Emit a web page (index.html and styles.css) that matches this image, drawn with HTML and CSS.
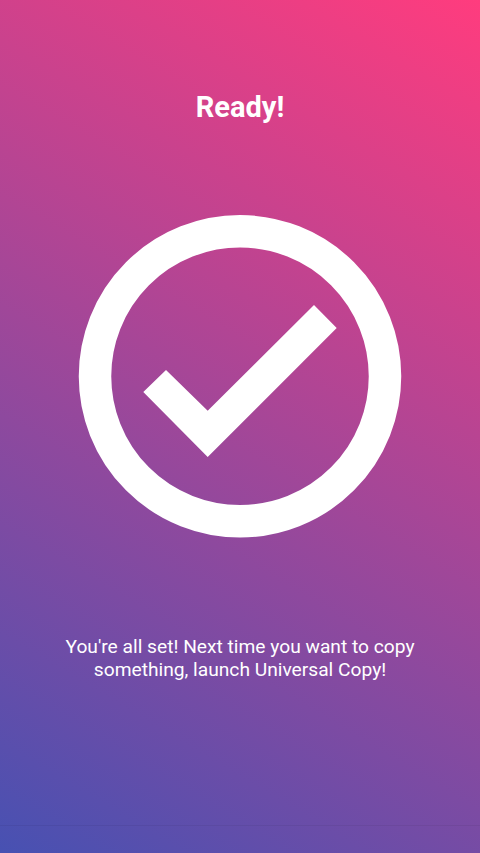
FILE: index.html
```html
<!DOCTYPE html>
<html lang="en">

<head>
    <meta charset="UTF-8">
    <title>Ready!</title>
    <link rel="stylesheet" href="styles.css">
</head>

<body>
    <div class="screen">
        <h1 class="title">Ready!</h1>
        <svg class="check" viewBox="0 0 324 324" aria-hidden="true">
            <circle cx="162" cy="162.300" r="145" fill="none" stroke="#fff" stroke-width="32.500" />
            <path fill="#fff" d="M236 91 L258.700 114 L129.700 243 L65.300 178 L88 156 L129.700 196.700 Z" />
        </svg>
        <p class="message">You're all set! Next time you want to copy something, launch Universal Copy!</p>
    </div>
    <div class="navBar"></div>
</body>

</html>
```

FILE: styles.css
```css
* {
    margin: 0px;
    padding: 0px;
}

html,
body {
    width: 100%;
    height: 100%;
}

body {
    display: flex;
    flex-direction: column;
    background: linear-gradient(31deg, #4751b2 0%, #ff3c7e 100%);
    color: #fff;
    font-family: Roboto, "Noto Sans", sans-serif;
    overflow: hidden;
}

.screen {
    flex: 1;
    display: flex;
    flex-direction: column;
    align-items: center;
    padding-top: 90px;
}

.title {
    font-size: 29px;
    line-height: 34px;
    font-weight: 700;
}

.check {
    width: 324px;
    height: 324px;
    margin-top: 90px;
}

.message {
    width: 372px;
    margin-top: 97px;
    font-size: 19.200px;
    line-height: 23px;
    text-align: center;
}

.navBar {
    height: 27px;
    border-top: 1px solid rgba(0, 0, 0, 0.05);
}
```
